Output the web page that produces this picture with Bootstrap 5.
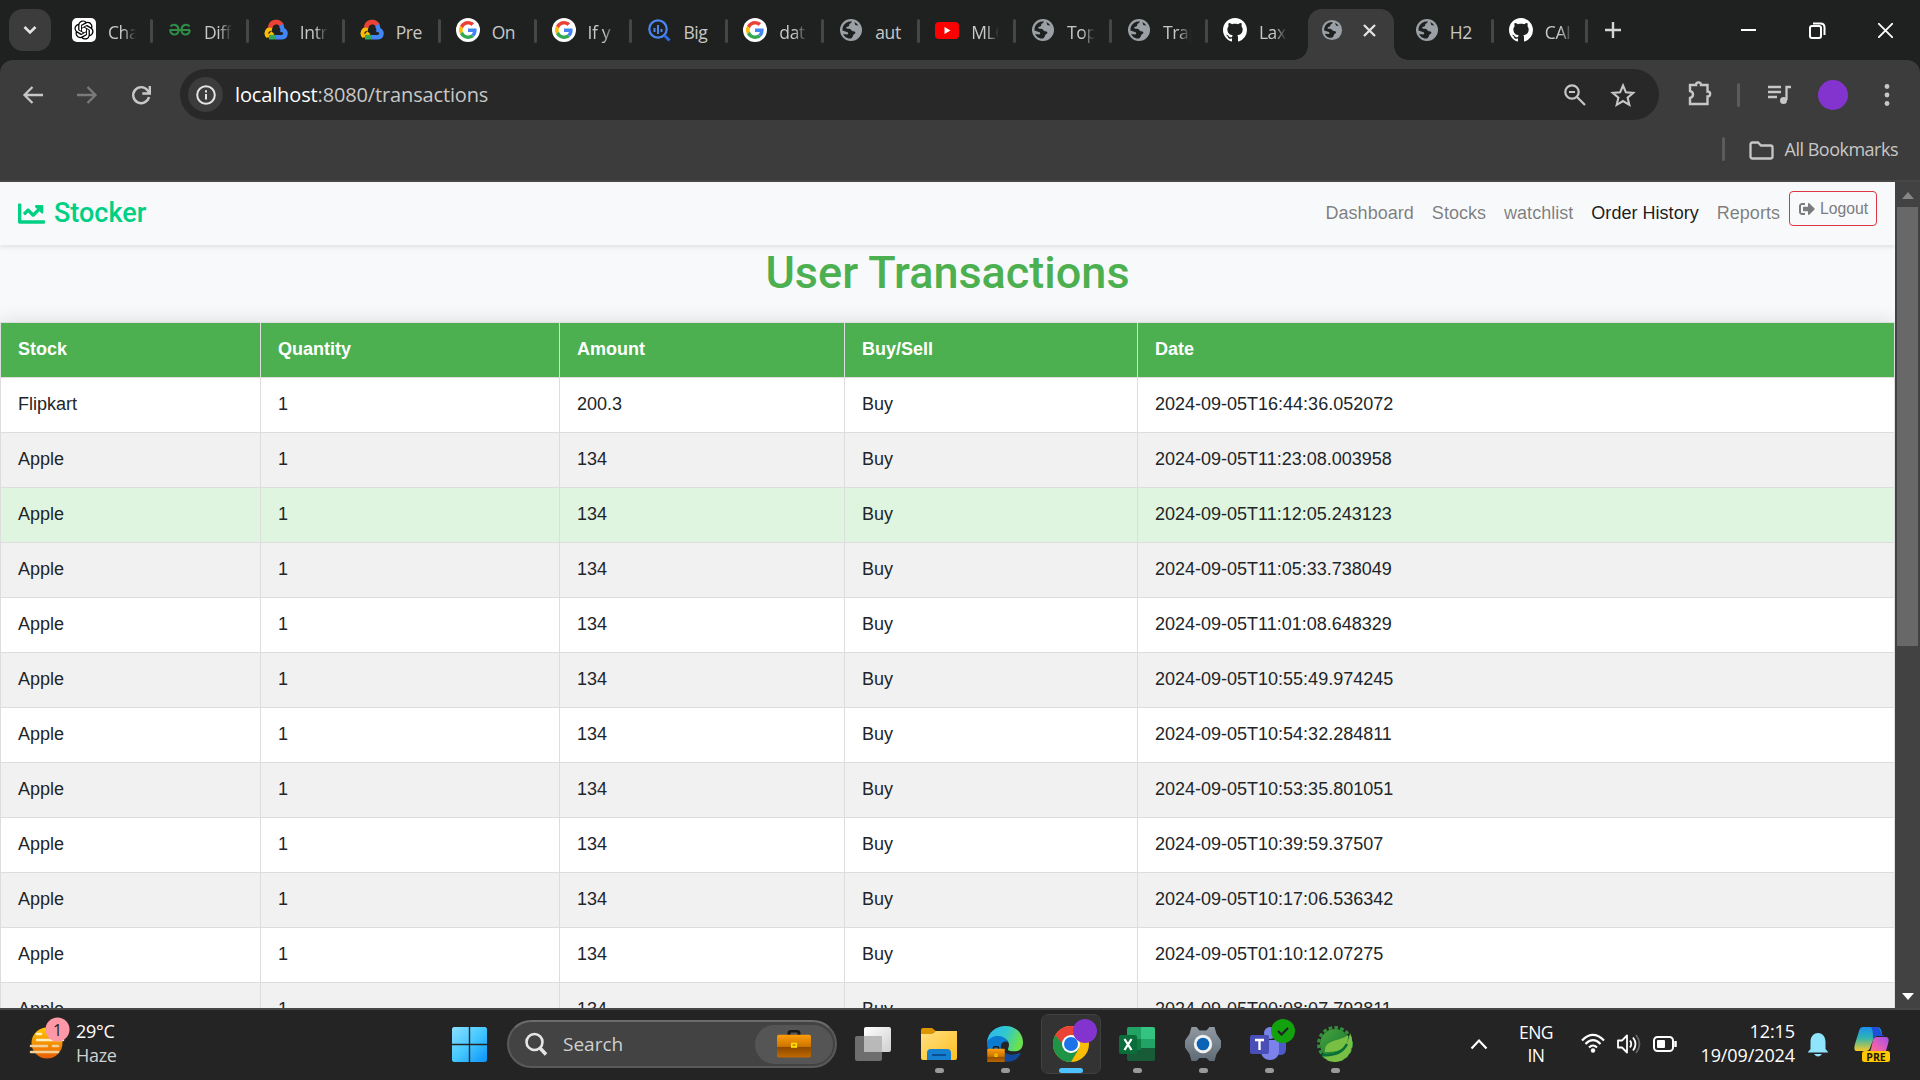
<!DOCTYPE html>
<html lang="en">
<head>
<meta charset="utf-8">
<title>Transactions</title>
<link href="https://cdn.jsdelivr.net/npm/bootstrap@5.3.0/dist/css/bootstrap.min.css" rel="stylesheet">
<style>
html{font-size:18px}
body{width:1920px;height:1080px;overflow:hidden;background:#1f2120;font-family:"Liberation Sans",Arial,sans-serif}
svg{display:block;flex:none}
.ui{font-family:"Open Sans","Noto Sans",sans-serif}
/* tab strip */
.strip{height:60px;background:#1f2120;color:#c7c7c7}
.finder{width:42px;height:42px;margin:9px 5px 0 9px;border-radius:14px;background:#3c3c3c}
.tab{width:95.92px;height:60px;padding:0 0 0 16px;position:relative;flex:none}
.tab::after{content:"";position:absolute;right:-1px;top:19px;width:3px;height:24px;border-radius:2px;background:#464646}
.tab.bare::after{display:none}
.tab span{width:28px;margin-left:12px;overflow:hidden;white-space:nowrap;font-size:17.5px;letter-spacing:-.4px;line-height:26px;margin-top:3px;-webkit-mask-image:linear-gradient(90deg,#000 55%,transparent 100%);mask-image:linear-gradient(90deg,#000 55%,transparent 100%)}
.tab span.whole{-webkit-mask-image:none;mask-image:none}
.live{width:86px;height:51px;margin:9px 5px 0 5px;border-radius:14px 14px 0 0;background:#3c3c3c;position:relative;padding:0 18px 9px 13px;flex:none}
.live::before,.live::after{content:"";position:absolute;bottom:0;width:14px;height:14px}
.live::before{left:-14px;background:radial-gradient(circle at 0 0,transparent 13.5px,#3c3c3c 14px)}
.live::after{right:-14px;background:radial-gradient(circle at 100% 0,transparent 13.5px,#3c3c3c 14px)}
.wins{width:152px;margin-right:27px;height:60px}
/* toolbar */
.bars{height:122px;background:#3c3c3c;border-bottom:2px solid #474747;border-radius:13px 13px 0 0}
.tools{height:60px;padding:9px 26px 0 21px}
.omni{width:1479px;height:51px;margin-left:27px;border-radius:26px;background:#282828;padding:0 23px 0 8px}
.info{width:35px;height:35px;border-radius:50%;background:#3c3c3c}
.url{font-size:20px;letter-spacing:-.14px;color:#c7c7c7;margin-left:12px;white-space:nowrap}
.url b{font-weight:400;color:#fff}
.vbar{width:3px;height:24px;border-radius:2px;background:#5c5c5c}
.face{width:30px;height:30px;border-radius:50%;background:#8434ce}
.marks{height:58px;padding:0 22px 0 0;color:#c7c7c7;font-size:18px}
/* page */
.view{height:826px}
.page{width:1895px;height:826px;overflow:hidden;background:#f8f9fb}
.top{height:63px;padding:9px 18px;background:#f8f9fb;box-shadow:0 2px 5px rgba(0,0,0,.1);position:relative}
.brandname{font:500 27px/40px Roboto,sans-serif;color:#00d084;gap:9px;height:44px}
.top .nav-link{color:rgba(0,0,0,.5);padding:9px;font-size:18px;letter-spacing:.03px;line-height:27px}
.top .nav-link.now{color:rgba(0,0,0,.9)}
.leave{width:88px;height:35px;border:1px solid #dc3545;border-radius:4px;color:#7b7c7d;font-size:15.75px;gap:5px;padding:0 8px 0 9px}
.title{font:500 45px/56px Roboto,sans-serif;color:#4caf50;height:77px;text-align:center}
.grid{width:1895px;table-layout:fixed;border-collapse:collapse;font-size:18px;line-height:27px;color:#212529;background:#fff;box-shadow:0 0 18px rgba(0,0,0,.12)}
.grid th,.grid td{border:1px solid #ddd;padding:13px 17px 14px;height:55px;white-space:nowrap}
.grid th{background:#4caf50;color:#fff}
.grid tbody tr:nth-child(even){background:#f1f1f1}
.grid tbody tr.hot{background:#e0f5e0}
.scroll{width:25px;background:#424242;padding:10px 0 8px}
.thumb{width:21px;height:441px;background:#686868;margin:8px 0 347px}
/* taskbar */
.dock{height:72px;border-top:2px solid #474747;background:#242424;color:#fff;font-size:17px}
.dock .wx{width:452px;padding:5px 0 0 28px}
.wx .two,.when{line-height:24px;font-size:18px;letter-spacing:-.3px;white-space:nowrap}
.dot{position:absolute;left:50%;bottom:1px;width:9px;height:5px;margin-left:-4.5px;border-radius:3px;background:#9a9a9a}
.app{width:60px;height:60px;margin-right:6px;position:relative;margin-top:4px;border-radius:7px;flex:none}
.app.on{background:#333;border:1px solid #404040}
.app.on .dot{width:24px;margin-left:-12px;background:#4cc2ff;bottom:0}
.find{width:330px;height:48px;margin:10px 12px 0 20px;border-radius:24px;background:#434343;border:2px solid #5a5a5a;border-top-color:#6c6c6c;padding:0 2px 0 16px;color:#d0d0d0;font-size:19px;flex:none}
.bag{width:78px;height:39px;border-radius:20px;background:#555}
.pip{position:absolute;width:24px;height:24px;border-radius:50%}
</style>
<script src="https://cdn.jsdelivr.net/npm/bootstrap@5.3.0/dist/js/bootstrap.bundle.min.js"></script>
</head>
<body>
<svg width="0" height="0" class="position-absolute">
<defs>
<symbol id="globe" viewBox="0 0 24 24"><circle cx="12" cy="12" r="11" fill="#9aa0a6"/><path d="M3.400 12.600 3.600 10C4.600 6 7.600 3.300 12.600 3.200l-.2 1.600c-1.200.8-2.400 1-2.200 2.400-.2 2-3 1-3 2.600.2 1.400 2 .8 3.200 1 2 .4 2 2 3.400 2.400.8.2 2.400 0 2.600 1.200.2 1.400-1.800 1.600-2.200 2.600-.4 1.400-.6 2.400-2.200 3.500C7 20.800 5 18 4.200 16l4 .4c1.400-.2 1.200-1.600.4-2.200z" fill="#1f2120"/><path d="M15.200 4.300c1.200 1.400.4 2.400 1.600 3 1 .4 1.600-.2 2.600.7-1-2.200-2.400-3.100-4.200-3.700z" fill="#1f2120"/></symbol>
<symbol id="goog" viewBox="0 0 24 24"><circle cx="12" cy="12" r="12" fill="#fff"/><g transform="translate(3 3) scale(.375)"><path fill="#EA4335" d="M24 9.500c3.540 0 6.710 1.220 9.210 3.600l6.850-6.850C35.900 2.380 30.470 0 24 0 14.620 0 6.510 5.380 2.560 13.220l7.980 6.190C12.430 13.720 17.740 9.500 24 9.500z"/><path fill="#4285F4" d="M46.980 24.550c0-1.570-.15-3.090-.38-4.550H24v9.020h12.940c-.58 2.960-2.260 5.480-4.780 7.180l7.730 6c4.510-4.180 7.090-10.360 7.090-17.650z"/><path fill="#FBBC05" d="M10.530 28.590c-.48-1.450-.76-2.990-.76-4.590s.27-3.140.76-4.590l-7.980-6.190C.92 16.460 0 20.120 0 24c0 3.880.92 7.540 2.560 10.780l7.970-6.190z"/><path fill="#34A853" d="M24 48c6.480 0 11.930-2.130 15.890-5.810l-7.730-6c-2.150 1.450-4.920 2.300-8.160 2.300-6.260 0-11.570-4.220-13.470-9.910l-7.980 6.190C6.510 42.620 14.620 48 24 48z"/></g></symbol>
<symbol id="gcp" viewBox="0 0 24 24"><g fill="none" stroke-width="4.600"><path d="M8 11.200c-3-.8-5.600 1.400-5.600 4 0 1.300.6 2.600 1.800 3.500" stroke="#FBBC05" stroke-width="4"/><path d="M4.500 19.500 8.800 14.600" stroke="#FBBC05" stroke-width="4"/><path d="M6 9.600C7.200 3.200 14.800 2 18 7.700" stroke="#EA4335"/><path d="M16.600 7.300c1.600 1.300 2 3 2 4.600 4 .6 3.800 7.200-.6 7.300h-6" stroke="#4285F4"/><path d="M5 19.200h7" stroke="#34A853"/></g></symbol>
<symbol id="cat" viewBox="0 0 16 16"><path fill="#fff" d="M8 0C3.580 0 0 3.580 0 8c0 3.540 2.290 6.530 5.470 7.590.4.070.55-.17.55-.38 0-.19-.01-.82-.01-1.490-2.010.37-2.530-.49-2.690-.94-.09-.23-.48-.94-.82-1.130-.28-.15-.68-.52-.01-.53.63-.01 1.080.58 1.230.82.72 1.210 1.870.87 2.330.66.07-.52.28-.87.51-1.070-1.780-.2-3.640-.89-3.640-3.950 0-.87.31-1.590.82-2.150-.08-.2-.36-1.020.08-2.120 0 0 .67-.21 2.200.82.64-.18 1.320-.27 2-.27s1.360.09 2 .27c1.530-1.040 2.200-.82 2.200-.82.44 1.100.16 1.920.08 2.120.51.56.82 1.270.82 2.150 0 3.070-1.870 3.750-3.650 3.950.29.25.54.73.54 1.480 0 1.070-.01 1.930-.01 2.200 0 .21.15.46.55.38A8.010 8.010 0 0 0 16 8c0-4.420-3.580-8-8-8z"/></symbol>
<linearGradient id="gw" x1="0" y1="0" x2="1" y2="1"><stop offset="0" stop-color="#8be0ff"/><stop offset=".5" stop-color="#45c8ff"/><stop offset="1" stop-color="#0a93f7"/></linearGradient>
<linearGradient id="gs" x1="0" y1="0" x2="0" y2="1"><stop offset="0" stop-color="#ffc800"/><stop offset="1" stop-color="#e85d04"/></linearGradient>
<linearGradient id="gf" x1="0" y1="0" x2="1" y2="1"><stop offset="0" stop-color="#ffe083"/><stop offset="1" stop-color="#ffbf1f"/></linearGradient>
<linearGradient id="ge" x1="0" y1="0" x2="1" y2=".3"><stop offset="0" stop-color="#2fb5f0"/><stop offset=".55" stop-color="#30c8d0"/><stop offset="1" stop-color="#6be04f"/></linearGradient>
<linearGradient id="gt" x1="0" y1="0" x2="1" y2="1"><stop offset="0" stop-color="#ffffff"/><stop offset="1" stop-color="#cfcfcf"/></linearGradient>
<linearGradient id="gg" x1="0" y1="0" x2="0" y2="1"><stop offset="0" stop-color="#9099a2"/><stop offset="1" stop-color="#5f6b76"/></linearGradient>
<linearGradient id="gc" x1="0" y1="0" x2="0" y2="1"><stop offset="0" stop-color="#1b8ff0"/><stop offset=".45" stop-color="#2fb5b0"/><stop offset="1" stop-color="#f5c92a"/></linearGradient>
<linearGradient id="gp" x1="1" y1="0" x2="0" y2="1"><stop offset="0" stop-color="#a44ff0"/><stop offset=".6" stop-color="#f062a8"/><stop offset="1" stop-color="#ff8a5c"/></linearGradient>
<linearGradient id="gl" x1="0" y1="0" x2="1" y2="1"><stop offset="0" stop-color="#4aa53c"/><stop offset="1" stop-color="#0a7034"/></linearGradient>
<linearGradient id="gb" x1="0" y1="0" x2="0" y2="1"><stop offset="0" stop-color="#ff9d0a"/><stop offset=".55" stop-color="#c97200"/><stop offset=".56" stop-color="#8f4a00"/><stop offset="1" stop-color="#c06a00"/></linearGradient>
<symbol id="case" viewBox="0 0 34 33"><path d="M12 6V3.500Q12 1.500 14 1.500h6q2 0 2 2V6" fill="none" stroke="#17181a" stroke-width="3"/><rect y="5.500" width="34" height="27" rx="2" fill="url(#gb)"/><rect x="14" y="15" width="6" height="6" fill="#ffe000"/><rect x="15.500" y="16.500" width="3" height="2.500" fill="#c99700"/></symbol>
</defs></svg>

<div class="ui strip d-flex">
<div class="finder d-flex align-items-center justify-content-center"><svg width="14" height="10" viewBox="0 0 14 10"><path d="M1.500 2 7 7.500 12.500 2" fill="none" stroke="#e3e3e3" stroke-width="2.600"/></svg></div>
<div class="tab d-flex align-items-center"><svg width="24" height="24"><rect width="24" height="24" rx="5" fill="#fff"/><g transform="translate(2.400 2.400) scale(.8)"><path d="M22.2819 9.8211a5.9847 5.9847 0 0 0-.5157-4.9108 6.0462 6.0462 0 0 0-6.5098-2.900A6.0651 6.0651 0 0 0 4.9807 4.1818a5.9847 5.9847 0 0 0-3.9977 2.900 6.0462 6.0462 0 0 0 .7427 7.0966 5.980 5.980 0 0 0 .511 4.9107 6.051 6.051 0 0 0 6.5146 2.9001A5.9847 5.9847 0 0 0 13.2599 24a6.0557 6.0557 0 0 0 5.7718-4.2058 5.9894 5.9894 0 0 0 3.9977-2.9001 6.0557 6.0557 0 0 0-.7475-7.0729zm-9.022 12.6081a4.4755 4.4755 0 0 1-2.8764-1.0408l.1419-.0804 4.7783-2.7582a.7948.7948 0 0 0 .3927-.6813v-6.7369l2.020 1.1686a.071.071 0 0 1 .038.0615v5.5826a4.504 4.504 0 0 1-4.4945 4.4849zm-9.6607-4.1254a4.4708 4.4708 0 0 1-.5346-3.0137l.142.0852 4.783 2.7582a.7712.7712 0 0 0 .7806 0l5.8428-3.3685v2.3324a.0804.0804 0 0 1-.0332.0615L9.740 19.9502a4.4992 4.4992 0 0 1-6.1408-1.6464zM2.3408 7.8956a4.485 4.485 0 0 1 2.3655-1.9728V11.600a.7664.7664 0 0 0 .3879.6765l5.8144 3.3543-2.0201 1.1685a.0757.0757 0 0 1-.071 0l-4.8303-2.7865A4.504 4.504 0 0 1 2.3408 7.872zm16.5963 3.8558L13.1038 8.364 15.1192 7.200a.0757.0757 0 0 1 .071 0l4.8303 2.7913a4.4944 4.4944 0 0 1-.6765 8.1042v-5.6772a.790.790 0 0 0-.407-.667zm2.0107-3.0231l-.142-.0852-4.7735-2.7818a.7759.7759 0 0 0-.7854 0L9.409 9.2297V6.8974a.0662.0662 0 0 1 .0284-.0615l4.8303-2.7866a4.4992 4.4992 0 0 1 6.6802 4.660zM8.3065 12.863l-2.020-1.1638a.0804.0804 0 0 1-.038-.0567V6.0742a4.4992 4.4992 0 0 1 7.3757-3.4537l-.142.0805L8.704 5.459a.7948.7948 0 0 0-.3927.6813zm1.0976-2.3654l2.602-1.4998 2.6069 1.4998v2.9994l-2.5974 1.4997-2.6067-1.4997Z"/></g></svg><span>Cha</span></div>
<div class="tab d-flex align-items-center"><svg width="24" height="24" fill="none" stroke="#2f8d46" stroke-width="2"><path d="M1.500 12h20.500M2.500 8.500C5 5.500 10.500 6.500 10.500 12S3.500 18.500 2 12M21.500 8.500C19 5.500 13.500 6.500 13.500 12s7 6.500 8.500 0"/></svg><span>Diff</span></div>
<div class="tab d-flex align-items-center"><svg width="24" height="24"><use href="#gcp"/></svg><span>Intr</span></div>
<div class="tab d-flex align-items-center"><svg width="24" height="24"><use href="#gcp"/></svg><span class="whole">Pre</span></div>
<div class="tab d-flex align-items-center"><svg width="24" height="24"><use href="#goog"/></svg><span class="whole">On</span></div>
<div class="tab d-flex align-items-center"><svg width="24" height="24"><use href="#goog"/></svg><span>If y</span></div>
<div class="tab d-flex align-items-center"><svg width="24" height="24" fill="none" stroke="#4a86f0"><circle cx="11" cy="11" r="8.700" stroke-width="2.200"/><path d="m17.500 17.500 5 5" stroke="#2f6be0" stroke-width="3"/><path d="M7.500 10v4M11 7v9M14.500 11v3" stroke-width="2"/></svg><span class="whole">Big</span></div>
<div class="tab d-flex align-items-center"><svg width="24" height="24"><use href="#goog"/></svg><span>dat</span></div>
<div class="tab d-flex align-items-center"><svg width="24" height="24"><use href="#globe"/></svg><span class="whole">aut</span></div>
<div class="tab d-flex align-items-center"><svg width="24" height="24"><rect y="4" width="24" height="17" rx="4" fill="#f00"/><path d="m9.500 9 6 3.500-6 3.500z" fill="#fff"/></svg><span>MLO</span></div>
<div class="tab d-flex align-items-center"><svg width="24" height="24"><use href="#globe"/></svg><span>Top</span></div>
<div class="tab d-flex align-items-center"><svg width="24" height="24"><use href="#globe"/></svg><span>Trap</span></div>
<div class="tab bare d-flex align-items-center"><svg width="24" height="24"><use href="#cat"/></svg><span>Lax</span></div>
<div class="live d-flex align-items-center justify-content-between"><svg width="22" height="22"><use href="#globe"/></svg><svg width="13" height="13" stroke="#e3e3e3" stroke-width="2.300"><path d="m1 1 11 11M12 1 1 12"/></svg></div>
<div class="tab d-flex align-items-center" style="width:94px"><svg width="24" height="24"><use href="#globe"/></svg><span class="whole" style="margin-left:11px">H2</span></div>
<div class="tab d-flex align-items-center" style="width:94px"><svg width="24" height="24"><use href="#cat"/></svg><span>CAI</span></div>
<div class="d-flex align-items-center ps-3 pb-0"><svg width="16" height="16" stroke="#d5d5d5" stroke-width="2.400"><path d="M0 8h16M8 0v16"/></svg></div>
<div class="wins d-flex align-items-center justify-content-between ms-auto"><svg width="15" height="3"><path d="M0 0h15v2H0z" fill="#fff"/></svg><svg width="17" height="17" fill="none" stroke="#fff" stroke-width="2"><rect x="1" y="4" width="11" height="12" rx="2"/><path d="M4 1.500h7.500q4 0 4 4V13"/></svg><svg width="15" height="15" stroke="#fff" stroke-width="1.800"><path d="m0 0 15 15M15 0 0 15"/></svg></div>
</div>

<div class="ui bars">
<div class="tools d-flex align-items-center">
<svg width="24" height="20" fill="none" stroke="#c7c7c7" stroke-width="2.300"><path d="M22 10H4M11.500 2l-8 8 8 8"/></svg>
<svg style="margin-left:30px" width="24" height="20" fill="none" stroke="#7a7a7a" stroke-width="2.300"><path d="M2 10h18M12.500 2l8 8-8 8"/></svg>
<svg style="margin-left:30px" width="24" height="24" fill="none" stroke="#c7c7c7" stroke-width="2.400"><path d="M20 14a8 8 0 1 1-1.500-6.800L20.500 10"/><path d="M20.800 3v7.500h-7.500"/></svg>
<div class="omni d-flex align-items-center">
<div class="info d-flex align-items-center justify-content-center"><svg width="20" height="20" fill="none" stroke="#e3e3e3" stroke-width="2"><circle cx="10" cy="10" r="8.800"/><path d="M10 9v5.500M10 5.200v2.200"/></svg></div>
<div class="url"><b>localhost</b>:8080/transactions</div>
<svg class="ms-auto" width="24" height="24" fill="none" stroke="#c7c7c7" stroke-width="2.200"><circle cx="9" cy="9" r="6.700"/><path d="m14 14 8 8M6 9h6"/></svg>
<svg style="margin-left:23px" width="26" height="24" fill="none" stroke="#c7c7c7" stroke-width="2.100"><path d="m13 2.500 2.900 6.800 7.300.6-5.600 4.800 1.700 7.100-6.300-3.800-6.300 3.800 1.700-7.100-5.600-4.800 7.300-.6z"/></svg>
</div>
<svg style="margin:-3px 0 0 28px" width="26" height="26" fill="none" stroke="#c7c7c7" stroke-width="2.400"><path d="M3 5h6c0-3.500 5-3.500 5 0h6.500v6.500c3.500 0 3.500 5 0 5V24H3v-6c4-1 4-6 0-7z"/></svg>
<div class="vbar" style="margin-left:24px"></div>
<svg style="margin-left:28px" width="24" height="22" fill="none" stroke="#c7c7c7" stroke-width="2.300"><path d="M0 3h13M0 8h13M0 13h9M23 3h-4.500v13"/><circle cx="15.500" cy="16.500" r="3.500" fill="#c7c7c7" stroke="none"/></svg>
<div class="face" style="margin-left:26px"></div>
<svg style="margin-left:36px" width="6" height="24" fill="#c7c7c7"><circle cx="3" cy="3.500" r="2.400"/><circle cx="3" cy="12" r="2.400"/><circle cx="3" cy="20.500" r="2.400"/></svg>
</div>
<div class="marks d-flex align-items-center justify-content-end"><div class="vbar"></div><svg style="margin:2px 11px 0 24px" width="25" height="19" fill="none" stroke="#c7c7c7" stroke-width="2.300"><path d="M1.500 15V3.500q0-2 2-2H9l3 3h9.500q2 0 2 2V15.500q0 2-2 2h-18q-2 0-2-2z"/></svg><span style="letter-spacing:-.5px">All Bookmarks</span></div>
</div>

<div class="view d-flex">
<div class="page">
<nav class="top d-flex justify-content-between align-items-start">
<div class="brandname d-flex align-items-center"><svg width="27" height="27" viewBox="0 0 512 512" fill="#00d084"><path d="M496 384H64V80c0-8.840-7.160-16-16-16H16C7.160 64 0 71.160 0 80v336c0 17.670 14.330 32 32 32h464c8.840 0 16-7.160 16-16v-32c0-8.840-7.160-16-16-16zM464 96H345.940c-21.380 0-32.090 25.850-16.970 40.970l32.400 32.400L288 242.750l-73.370-73.370c-12.500-12.500-32.760-12.500-45.250 0l-68.690 68.690c-6.250 6.250-6.250 16.380 0 22.630l22.620 22.620c6.250 6.250 16.380 6.250 22.630 0L192 237.250l73.370 73.370c12.500 12.500 32.760 12.500 45.250 0l96-96 32.400 32.400c15.120 15.120 40.970 4.410 40.970-16.970V112c.01-8.840-7.150-16-15.990-16z"/></svg><span>Stocker</span></div>
<div class="d-flex align-items-start">
<a class="nav-link">Dashboard</a><a class="nav-link">Stocks</a><a class="nav-link">watchlist</a><a class="nav-link now">Order History</a><a class="nav-link me-0">Reports</a>
<div class="leave d-flex align-items-center"><svg width="16" height="16" viewBox="0 0 512 512" fill="#7b7c7d"><path d="M497 273L329 441c-15 15-41 4.500-41-17v-96H152c-13.300 0-24-10.700-24-24v-96c0-13.300 10.700-24 24-24h136V88c0-21.400 25.900-32 41-17l168 168c9.300 9.400 9.300 24.600 0 34zM192 436v-40c0-6.600-5.400-12-12-12H96c-17.700 0-32-14.300-32-32V160c0-17.700 14.300-32 32-32h84c6.600 0 12-5.400 12-12V76c0-6.600-5.400-12-12-12H96c-53 0-96 43-96 96v192c0 53 43 96 96 96h84c6.600 0 12-5.400 12-12z"/></svg>Logout</div>
</div>
</nav>
<h1 class="title mb-0">User Transactions</h1>
<table class="grid">
<colgroup><col style="width:260px"><col style="width:299px"><col style="width:285px"><col style="width:293px"><col></colgroup>
<thead><tr><th>Stock</th><th>Quantity</th><th>Amount</th><th>Buy/Sell</th><th>Date</th></tr></thead>
<tbody>
<tr><td>Flipkart</td><td>1</td><td>200.3</td><td>Buy</td><td>2024-09-05T16:44:36.052072</td></tr>
<tr><td>Apple</td><td>1</td><td>134</td><td>Buy</td><td>2024-09-05T11:23:08.003958</td></tr>
<tr class="hot"><td>Apple</td><td>1</td><td>134</td><td>Buy</td><td>2024-09-05T11:12:05.243123</td></tr>
<tr><td>Apple</td><td>1</td><td>134</td><td>Buy</td><td>2024-09-05T11:05:33.738049</td></tr>
<tr><td>Apple</td><td>1</td><td>134</td><td>Buy</td><td>2024-09-05T11:01:08.648329</td></tr>
<tr><td>Apple</td><td>1</td><td>134</td><td>Buy</td><td>2024-09-05T10:55:49.974245</td></tr>
<tr><td>Apple</td><td>1</td><td>134</td><td>Buy</td><td>2024-09-05T10:54:32.284811</td></tr>
<tr><td>Apple</td><td>1</td><td>134</td><td>Buy</td><td>2024-09-05T10:53:35.801051</td></tr>
<tr><td>Apple</td><td>1</td><td>134</td><td>Buy</td><td>2024-09-05T10:39:59.37507</td></tr>
<tr><td>Apple</td><td>1</td><td>134</td><td>Buy</td><td>2024-09-05T10:17:06.536342</td></tr>
<tr><td>Apple</td><td>1</td><td>134</td><td>Buy</td><td>2024-09-05T01:10:12.07275</td></tr>
<tr><td>Apple</td><td>1</td><td>134</td><td>Buy</td><td>2024-09-05T00:08:07.792811</td></tr>
</tbody></table>
</div>
<div class="scroll d-flex flex-column align-items-center"><svg width="12" height="7"><path d="m6 0 6 7H0z" fill="#868686"/></svg><div class="thumb"></div><svg width="12" height="7"><path d="m0 0h12L6 7z" fill="#fff"/></svg></div>
</div>

<div class="ui dock d-flex align-items-start">
<div class="wx d-flex"><svg width="44" height="56" viewBox="28 1015 44 56"><circle cx="47" cy="1043" r="15.500" fill="url(#gs)"/><g stroke="#fff0c4" stroke-width="2.600" stroke-linecap="round"><path d="M37 1034h4M37 1040h26"/><path d="M31 1046h16M53 1046h5M31 1052h27" stroke="#f2cf96"/></g><circle cx="57.500" cy="1029.500" r="12" fill="#ff98a6"/><text x="53" y="1035.500" font-size="16" fill="#222">1</text></svg><div class="two" style="margin:4px 0 0 4px">29°C<br><span style="color:#d0d0d0">Haze</span></div></div>
<svg style="margin-top:17px" width="35" height="35"><path fill="url(#gw)" d="M1.500 0H16.800v16.800H0V1.500zM18.200 0H33.500L35 1.500v15.300H18.200zM0 18.200h16.800V35H1.500L0 33.500zM18.200 18.200H35V33.500L33.500 35H18.200z"/></svg>
<div class="find d-flex align-items-center"><svg width="23" height="24" fill="none" stroke="#e6e6e6"><circle cx="9.500" cy="10" r="8" stroke-width="2.600"/><path d="m15 16 6 6.500" stroke-width="3.500"/></svg><span style="margin-left:15px;letter-spacing:0">Search</span><div class="bag ms-auto d-flex align-items-center justify-content-center"><svg width="34" height="28" viewBox="0 0 34 33" preserveAspectRatio="none"><use href="#case" width="34" height="33"/></svg></div></div>

<div class="app d-flex align-items-center justify-content-center" style="margin-left:-6px"><svg width="36" height="36"><rect x="9" y="1" width="27" height="25" rx="2" fill="url(#gt)"/><rect y="10" width="27" height="25" rx="2" fill="#777" fill-opacity=".9"/><path d="M9 10h18v16H9z" fill="#b9b9b9"/></svg></div>
<div class="app d-flex align-items-center justify-content-center"><svg width="36" height="36"><path d="M0 4q0-2 2-2h9l5 4h-3l-3 5H0z" fill="#dd9500"/><path d="M0 8h11l4-3h21v27q0 2-2 2H2q-2 0-2-2z" fill="url(#gf)"/><path d="M6 34v-7q0-4 4-4h16q4 0 4 4v7z" fill="#1580d0"/><path d="M11 29h14" stroke="#0a4f94" stroke-width="2"/></svg><i class="dot"></i></div>
<div class="app d-flex align-items-center justify-content-center"><svg width="36" height="36"><path d="M0 17C1-5 35-6 36 16c0 9-6 10-13 9-4-1-1-3-1-6 0-5-5-8-10-7C6 11 1 14 0 17z" fill="url(#ge)"/><path d="M0 17C3 8 17 8 21 16c-5-2-8 2-7 7 2 6 11 8 19 4-6 9-18 10-26 5-5-4-7-9-7-15z" fill="#0b7ad1"/><path d="M14 22c2 6 11 9 20 5-4 8-11 10-18 8z" fill="#114a9c"/><use href="#case" y="20" width="18" height="17"/></svg><i class="dot"></i></div>
<div class="app on d-flex align-items-center justify-content-center"><svg width="36" height="36" viewBox="0 0 36 36"><circle cx="18" cy="18" r="18" fill="#fbbc05"/><path d="M2.400 9A18 18 0 0 1 33.600 9H18L10 22.500z" fill="#ea4335"/><path d="M2.400 9A18 18 0 0 0 18 36l8-13.500-13 0z" fill="#1e9446"/><circle cx="18" cy="18" r="9" fill="#fff"/><circle cx="18" cy="18" r="7" fill="#1a73e8"/></svg><i class="pip" style="left:31px;top:4px;background:#8434ce"></i><i class="dot"></i></div>
<div class="app d-flex align-items-center justify-content-center"><svg width="36" height="34"><rect x="8" width="28" height="34" rx="2" fill="#185c37"/><path d="M8 2q0-2 2-2h12v12H8z" fill="#21a366"/><path d="M22 0h12q2 0 2 2v10H22z" fill="#33c481"/><path d="M8 12h14v11H8z" fill="#107c41"/><path d="M22 12h14v9H22z" fill="#21a366"/><rect y="8" width="18" height="19" rx="2" fill="#0b6e3a"/><path d="m5.500 12 7 11M12.500 12l-7 11" stroke="#fff" stroke-width="2.300"/></svg><i class="dot"></i></div>
<div class="app d-flex align-items-center justify-content-center"><svg width="36" height="36" viewBox="-18 -18 36 36"><path d="M-11.500-17h5l3 3.500h7l3-3.500h5l2 7 4.500 6.500v7l-4.500 6.500-2 7h-5l-3-3h-7l-3 3h-5l-2-7-4.500-6.500v-7l4.500-6.500z" fill="url(#gg)"/><circle r="9.200" fill="#f2f2f2"/><circle r="6.300" fill="#0b63b5"/></svg><i class="dot"></i></div>
<div class="app d-flex align-items-center justify-content-center"><svg width="38" height="36"><circle cx="20" cy="7" r="6" fill="#7b83eb"/><path d="M27 14h9v9q0 6-6 6h-3z" fill="#5059c9"/><path d="M11 14h18v11c0 12-18 12-18 0z" fill="#7b83eb"/><rect y="9" width="19" height="19" rx="2" fill="#4a4fb8"/><path d="M5 14h9M9.500 14v10" stroke="#fff" stroke-width="2.300"/></svg><i class="pip" style="left:32px;top:5px;background:#13a10e"></i><svg class="position-absolute" style="left:38px;top:13px" width="12" height="9" fill="none" stroke="#222" stroke-width="2.200"><path d="m1 4 3.500 3.500L11 1"/></svg><i class="dot"></i></div>
<div class="app d-flex align-items-center justify-content-center"><svg width="36" height="36"><circle cx="18" cy="18" r="16.500" fill="none" stroke="#348f3b" stroke-width="3" stroke-dasharray="3.600 2.300"/><circle cx="18" cy="18" r="15" fill="url(#gl)"/><path d="M33 7C39 20 33 35 18 36 12 36 8 33 6 30 20 30 31 22 33 7z" fill="#78bf43"/><path d="M8 26C7 13 22 16 31 9c1 12-8 18-23 17z" fill="#78bf43"/><path d="M5 29c12 1 21-3 25-11" fill="none" stroke="#087038" stroke-width="2.500"/></svg><i class="dot"></i></div>

<svg style="margin:28px 0 0 99px" width="18" height="12" fill="none" stroke="#fff" stroke-width="2.200"><path d="m1.500 10.500 7.500-8 7.500 8"/></svg>
<div class="text-center" style="width:54px;margin:11px 0 0 21px;line-height:23px;font-size:17.5px;letter-spacing:-.5px">ENG<br>IN</div>
<svg style="margin:22px 0 0 17px" width="26" height="22" fill="none" stroke="#fff" stroke-width="2.200"><path d="M2 8.500q11-11 22 0M5.500 12q7.500-7.500 15 0M9 15.500q4-4 8 0"/><circle cx="13" cy="18.500" r="2.200" fill="#fff" stroke="none"/></svg>
<svg style="margin:23px 0 0 11px" width="25" height="22" fill="none" stroke="#fff" stroke-width="1.800"><path d="M1 7.500h4L10 2.500v17L5 14.500H1z" stroke-linejoin="round"/><path d="M13 7.500q2.500 3.500 0 7M16 4.500q5 6.500 0 13"/><path d="M19 2q7 9 0 18" stroke="#666"/></svg>
<svg style="margin:25px 0 0 11px" width="25" height="18" fill="none" stroke="#fff" stroke-width="2"><rect x="1" y="2" width="19" height="14" rx="3.500"/><rect x="4" y="5" width="8" height="8" rx="1" fill="#fff" stroke="none"/><path d="M22.500 6v6" stroke-width="2.500"/></svg>
<div class="when text-end ms-auto" style="margin-top:9px;margin-right:13px;letter-spacing:-.1px">12:15<br>19/09/2024</div>
<svg style="margin-top:23px" width="20" height="24" fill="#8fe6fc"><path d="M2.500 16V9C2.500-3 17.500-3 17.500 9v7l2.500 3v.5H0V19zM6 21h8q-4 5-8 0z"/></svg>
<svg style="margin:17px 29px 0 26px" width="37" height="37"><path d="M9 0h14q5 0 5 9h-5q-3 0-4 4l-3 8q-1 3-4 3H3q-4 0-2-7l4-13q1-4 4-4z" fill="url(#gc)"/><path d="M16 0h7c4 0 3 9 8 9h-8c-3 0-4 3-4 4 0-6 0-13-3-13z" fill="#1d4fd8"/><path d="M23 10h9q4 0 2 7l-3 10H12q4-1 5-5l2-9q1-3 4-3z" fill="url(#gp)"/><rect x="8" y="24" width="28" height="11" rx="2.500" fill="#ffc800"/><text x="22" y="33.500" text-anchor="middle" font-size="10.500" font-weight="700" fill="#221a00">PRE</text></svg>
</div>
</body>
</html>
